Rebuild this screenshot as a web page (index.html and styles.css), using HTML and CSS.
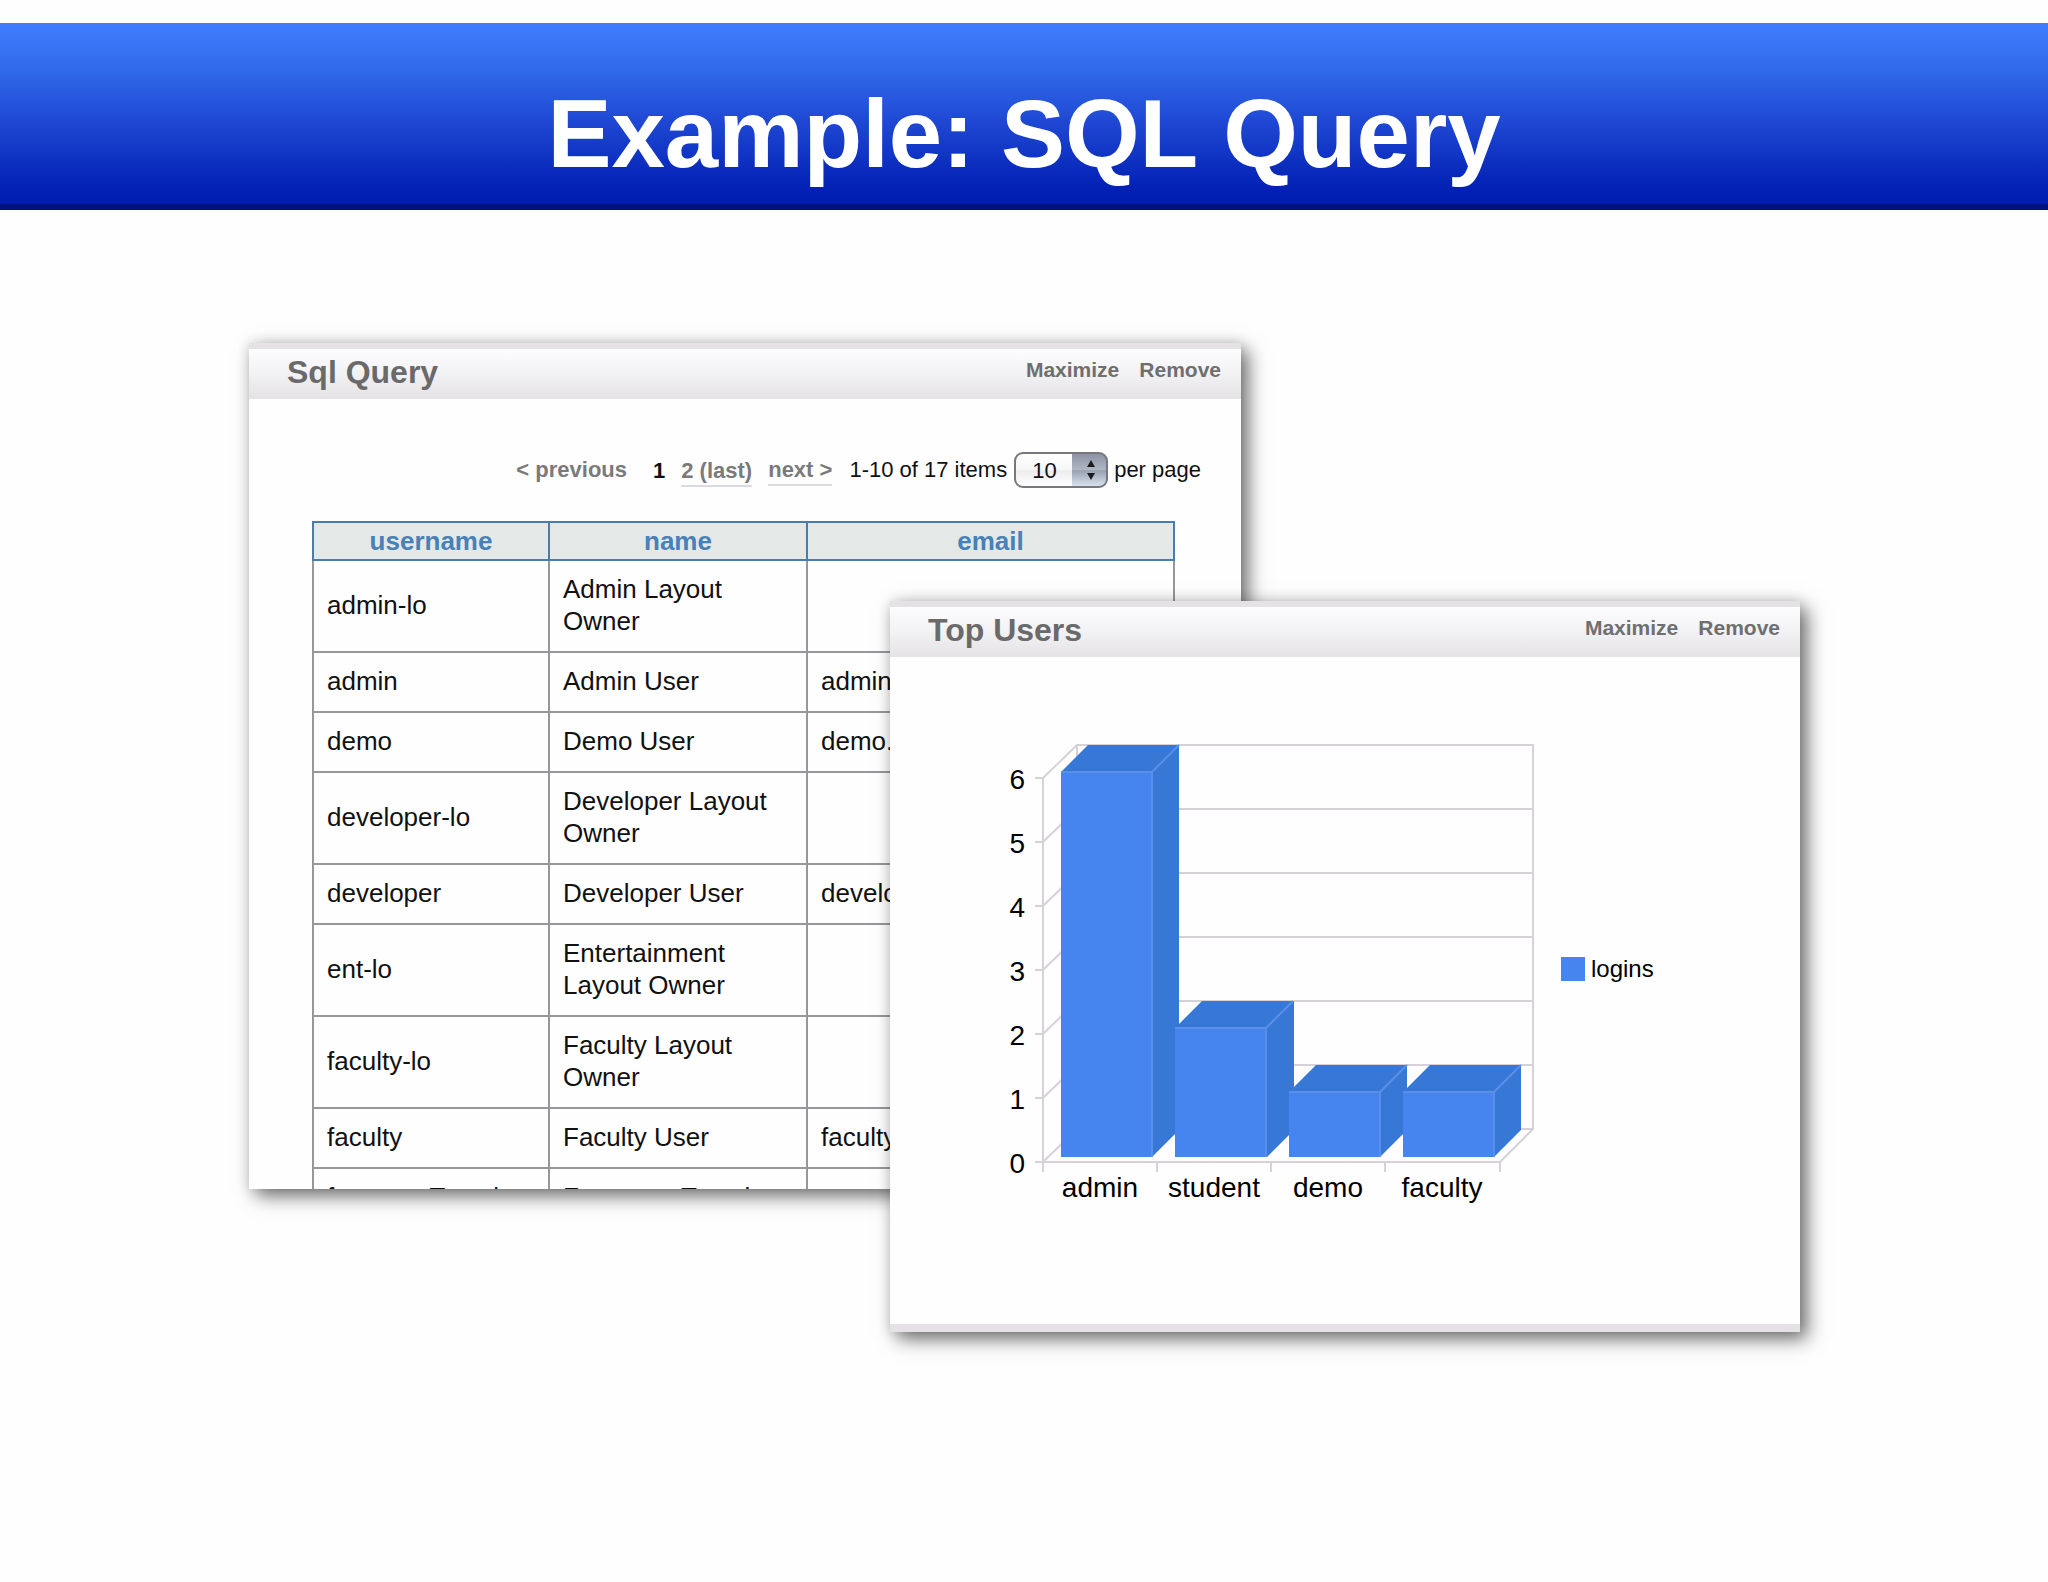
FILE: index.html
```html
<!DOCTYPE html>
<html lang="en">
<head>
<meta charset="utf-8">
<title>Example: SQL Query</title>
<link rel="stylesheet" href="styles.css">
</head>
<body>
<header class="banner"><h1>Example: SQL Query</h1></header>
<main class="stage">
  <section class="panel panel-query">
    <header class="panel-head">
      <h2>Sql Query</h2>
      <div class="panel-actions"><button type="button">Maximize</button><button type="button">Remove</button></div>
    </header>
    <nav class="pager" aria-label="Pages">
      <span class="previous">&lt; previous</span>
      <span class="pages"><b>1</b><a href="#page-2">2 (last)</a></span>
      <a class="next" href="#page-2">next &gt;</a>
      <span class="count">1-10 of 17 items</span>
      <span class="picker">
        <select id="page-size"><option>10</option><option>20</option></select>
        <svg class="arrows" viewBox="0 0 34 34" aria-hidden="true"><path d="M17 7l4 7h-8zM17 27l4-7h-8z"/></svg>
      </span>
      <label for="page-size">per page</label>
    </nav>
    <table class="users">
      <colgroup><col class="col-username"><col class="col-name"><col></colgroup>
      <thead><tr><th>username</th><th>name</th><th>email</th></tr></thead>
      <tbody>
        <tr><td>admin-lo</td><td>Admin Layout Owner</td><td></td></tr>
        <tr><td>admin</td><td>Admin User</td><td>admin</td></tr>
        <tr><td>demo</td><td>Demo User</td><td>demo.</td></tr>
        <tr><td>developer-lo</td><td>Developer Layout Owner</td><td></td></tr>
        <tr><td>developer</td><td>Developer User</td><td>developer</td></tr>
        <tr><td>ent-lo</td><td>Entertainment Layout Owner</td><td></td></tr>
        <tr><td>faculty-lo</td><td>Faculty Layout Owner</td><td></td></tr>
        <tr><td>faculty</td><td>Faculty User</td><td>faculty</td></tr>
        <tr><td>fragmentTemplate</td><td>Fragment Template</td><td></td></tr>
      </tbody>
    </table>
  </section>

  <section class="panel panel-chart">
    <header class="panel-head">
      <h2>Top Users</h2>
      <div class="panel-actions"><button type="button">Maximize</button><button type="button">Remove</button></div>
    </header>
    <svg class="chart" viewBox="890 657 910 665" role="img" aria-label="Logins by user">
      <g class="grid">
        <path d="M1077 745H1533V1129H1077zM1077 809H1533M1077 873H1533M1077 937H1533M1077 1001H1533M1077 1065H1533"/>
        <path d="M1043 778L1077 745M1043 842L1077 809M1043 906L1077 873M1043 970L1077 937M1043 1034L1077 1001M1043 1098L1077 1065M1043 1162L1077 1129"/>
        <path d="M1043 778V1172M1035 1162H1500L1533 1129M1035 778h8M1035 842h8M1035 906h8M1035 970h8M1035 1034h8M1035 1098h8M1157 1162v10M1271 1162v10M1385 1162v10M1500 1162v10"/>
      </g>
      <g>
        <path class="side" d="M1061 772l27-27h91v385l-27 27z"/><path class="front" d="M1061 772h91v385h-91z"/><path class="edge" d="M1061 772h91v385M1152 772l27-27"/>
        <path class="side" d="M1175 1028l27-27h92v129l-27 27z"/><path class="front" d="M1175 1028h91v129h-91z"/><path class="edge" d="M1175 1028h91v129M1266 1028l27-27"/>
        <path class="side" d="M1289 1092l27-27h91v65l-27 27z"/><path class="front" d="M1289 1092h91v65h-91z"/><path class="edge" d="M1289 1092h91v65M1380 1092l27-27"/>
        <path class="side" d="M1403 1092l27-27h91v65l-27 27z"/><path class="front" d="M1403 1092h91v65h-91z"/><path class="edge" d="M1403 1092h91v65M1494 1092l27-27"/>
      </g>
      <g class="scale">
        <text x="1025" y="789">6</text><text x="1025" y="853">5</text><text x="1025" y="917">4</text><text x="1025" y="981">3</text><text x="1025" y="1045">2</text><text x="1025" y="1109">1</text><text x="1025" y="1173">0</text>
      </g>
      <g class="names">
        <text x="1100" y="1197">admin</text><text x="1214" y="1197">student</text><text x="1328" y="1197">demo</text><text x="1442" y="1197">faculty</text>
      </g>
      <rect class="front" x="1561" y="957" width="24" height="24"/>
      <text class="legend" x="1591" y="977">logins</text>
    </svg>
  </section>
</main>
</body>
</html>
```

FILE: styles.css
```css
* { box-sizing: border-box; }

body {
  margin: 0;
  padding-top: 23px;
  background: #fefefe;
  color: #111;
  font-family: "Liberation Sans", Arial, sans-serif;
}

.banner {
  padding: 56px 0 15px;
  border-bottom: 6px solid #00107c;
  background: linear-gradient(#407eff, #2f68e8 28%, #1d46d2 56%, #0220b4 92%, #001eb0) padding-box;
  color: #fff;
  text-align: center;
}

h1 { margin: 0; font-size: 96px; line-height: 110px; }

/* Two overlapping windows share the middle column and the middle row. */
.stage {
  display: grid;
  grid-template-columns: 249fr 641fr 351fr 559fr 248fr;
  grid-template-rows: 258px 588px 143px;
  padding: 133px 0 240px;
}

.panel {
  overflow: hidden;
  border-top: 6px solid #e4e2e5;
  background: #fefefe;
  box-shadow: 7px 7px 18px rgba(0, 0, 0, .56), 0 0 12px rgba(60, 50, 70, .14);
}
.panel-query { grid-area: 1 / 2 / 3 / 4; }
.panel-chart { grid-area: 2 / 3 / 4 / 5; border-bottom: 8px solid #e4e2e5; }

.panel-head {
  display: flex;
  justify-content: space-between;
  height: 50px;
  padding: 4px 20px 0 38px;
  background: linear-gradient(#fdfcfe, #f2f1f3 50%, #e4e2e5);
  color: #6a6a6a;
}

h2 { margin: 0; font-size: 32px; line-height: 38px; }

.panel-actions { display: flex; gap: 20px; }
.panel-actions button {
  height: 34px;
  padding: 0;
  border: 0;
  background: none;
  color: #6f6f6f;
  font: bold 21px/34px "Liberation Sans", Arial, sans-serif;
}

.pager {
  display: flex;
  align-items: center;
  justify-content: flex-end;
  height: 36px;
  margin: 53px 40px 33px 0;
  font-size: 22px;
  line-height: 28px;
}
.previous, .pager a { color: #7a7a7a; font-weight: bold; text-decoration: none; }
.pager a { border-bottom: 2px solid #dcdade; }
.pager .next { margin-top: 2px; }
.pages { display: flex; gap: 16px; margin: 4px 16px 0 26px; }
.count { margin: 0 7px 0 17px; }

.picker { display: grid; width: 94px; margin-right: 6px; }
.picker select, .arrows { grid-area: 1 / 1; }
.picker select {
  appearance: none;
  height: 36px;
  padding: 0 0 0 16px;
  border: 2px solid #77777d;
  border-radius: 9px;
  background:
    linear-gradient(#8b93a5, #b0b7c4 50%, #98a1b1 52%, #d8e2ee) right / 34px 100% no-repeat,
    linear-gradient(#fff, #f6f6f6 50%, #ececee 52%, #fff);
  color: #111;
  font: 22px "Liberation Sans", Arial, sans-serif;
}
.arrows { width: 34px; height: 34px; justify-self: end; align-self: center; pointer-events: none; fill: #1c1c20; }

.users {
  width: calc(100% - 129px);
  margin-left: 63px;
  border-collapse: collapse;
  table-layout: fixed;
  font-size: 26px;
  line-height: 32px;
}
.col-username { width: 236px; }
.col-name { width: 258px; }
.users th { height: 38px; padding: 0; border: 2px solid #4a7dad; background: #e4e8e7; color: #4682b8; }
.users td { padding: 12px 13px 14px; border: 2px solid #98969a; }

.chart { display: block; width: 100%; height: auto; font-size: 28px; }
.grid { fill: none; stroke: #d6d2d8; stroke-width: 2; }
.side { fill: #3777d6; }
.front { fill: #4684f0; }
.edge { fill: none; stroke: #5a8fe8; stroke-width: 2; }
.scale { text-anchor: end; }
.names { text-anchor: middle; }
.legend { font-size: 24px; }
```
